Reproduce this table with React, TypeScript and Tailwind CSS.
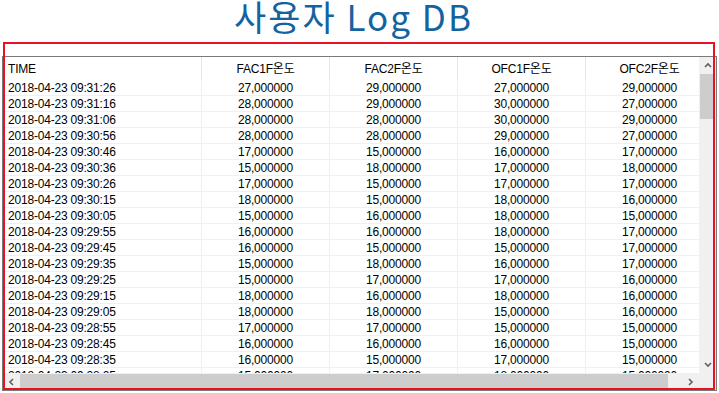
import React from 'react';

const ROWS: [string, number, number, number, number][] = [
  ['2018-04-23 09:31:26', 27, 29, 27, 29],
  ['2018-04-23 09:31:16', 28, 29, 30, 27],
  ['2018-04-23 09:31:06', 28, 28, 30, 29],
  ['2018-04-23 09:30:56', 28, 28, 29, 27],
  ['2018-04-23 09:30:46', 17, 15, 16, 17],
  ['2018-04-23 09:30:36', 15, 18, 17, 18],
  ['2018-04-23 09:30:26', 17, 15, 17, 17],
  ['2018-04-23 09:30:15', 18, 15, 18, 16],
  ['2018-04-23 09:30:05', 15, 16, 18, 15],
  ['2018-04-23 09:29:55', 16, 16, 18, 17],
  ['2018-04-23 09:29:45', 16, 15, 15, 17],
  ['2018-04-23 09:29:35', 15, 18, 16, 17],
  ['2018-04-23 09:29:25', 15, 17, 17, 16],
  ['2018-04-23 09:29:15', 18, 16, 18, 16],
  ['2018-04-23 09:29:05', 18, 18, 15, 16],
  ['2018-04-23 09:28:55', 17, 17, 15, 15],
  ['2018-04-23 09:28:45', 16, 16, 16, 15],
  ['2018-04-23 09:28:35', 16, 15, 17, 15],
  ['2018-04-23 09:28:25', 15, 17, 18, 15],
];

const HEADERS = ['FAC1F온도', 'FAC2F온도', 'OFC1F온도', 'OFC2F온도'];

const fmt = (n: number) => `${n},000000`;

function Chevron({ dir }: { dir: 'up' | 'down' | 'left' | 'right' }) {
  const pts = {
    up: '1,5 4,2 7,5',
    down: '1,2 4,5 7,2',
    left: '5,1 2,4 5,7',
    right: '2,1 5,4 2,7',
  }[dir];
  return (
    <svg width="8" height="8" viewBox="0 0 8 8">
      <polyline points={pts} fill="none" stroke="#606060" strokeWidth="1.6" />
    </svg>
  );
}

export default function App() {
  return (
    <div
      className="relative w-[719px] h-[393px] bg-white overflow-hidden"
      style={{ fontFamily: '"Liberation Sans", "Noto Sans CJK KR", sans-serif' }}
    >
      <div className="h-[42px] flex items-center justify-center pb-[11px] pr-[12px]">
        <h1
          className="text-[35px] leading-[31px] tracking-[2px] text-[#13639f] font-normal"
          style={{ fontFamily: '"Noto Sans CJK KR", "Noto Sans", sans-serif' }}
        >
          사용자 Log DB
        </h1>
      </div>

      <div className="mt-[14px] ml-[2px] w-[715px] h-[335px] border border-[#7a7a7a] flex flex-col">
        <div className="flex flex-1 min-h-0">
          <div className="flex-1 overflow-hidden text-[12px] text-black tracking-[-0.2px]">
            <div className="w-[711px]">
              <div className="flex h-[23px]">
                <div className="w-[199px] pl-[5px] flex items-center border-r border-[#e5e5e5]">TIME</div>
                {HEADERS.map((h) => (
                  <div key={h} className="w-[128px] flex items-center justify-center border-r border-[#e5e5e5]">
                    {h}
                  </div>
                ))}
              </div>
              {ROWS.map((r) => (
                <div key={r[0]} className="flex h-[16px] border-b border-[#f0f0f0]">
                  <div className="w-[199px] pl-[5px] flex items-center border-r border-[#f0f0f0]">{r[0]}</div>
                  {r.slice(1).map((v, i) => (
                    <div key={i} className="w-[128px] flex items-center justify-center border-r border-[#f0f0f0]">
                      {fmt(v as number)}
                    </div>
                  ))}
                </div>
              ))}
            </div>
          </div>

          <div className="w-[17px] bg-[#f0f0f0] flex flex-col">
            <div className="h-[17px] flex items-center justify-center">
              <Chevron dir="up" />
            </div>
            <div className="h-[45px] mx-[1px] bg-[#cdcdcd]" />
            <div className="flex-1" />
            <div className="h-[17px] flex items-center justify-center">
              <Chevron dir="down" />
            </div>
          </div>
        </div>

        <div className="h-[17px] flex">
          <div className="flex-1 bg-[#f0f0f0] flex">
            <div className="w-[17px] flex items-center justify-center">
              <Chevron dir="left" />
            </div>
            <div className="w-[648px] my-[1px] bg-[#cdcdcd]" />
            <div className="flex-1" />
            <div className="w-[17px] flex items-center justify-center">
              <Chevron dir="right" />
            </div>
          </div>
          <div className="w-[17px] bg-[#f0f0f0]" />
        </div>
      </div>

      <div className="absolute left-[3px] top-[42px] w-[712px] h-[348px] border-2 border-[#e81123] pointer-events-none" />
    </div>
  );
}
